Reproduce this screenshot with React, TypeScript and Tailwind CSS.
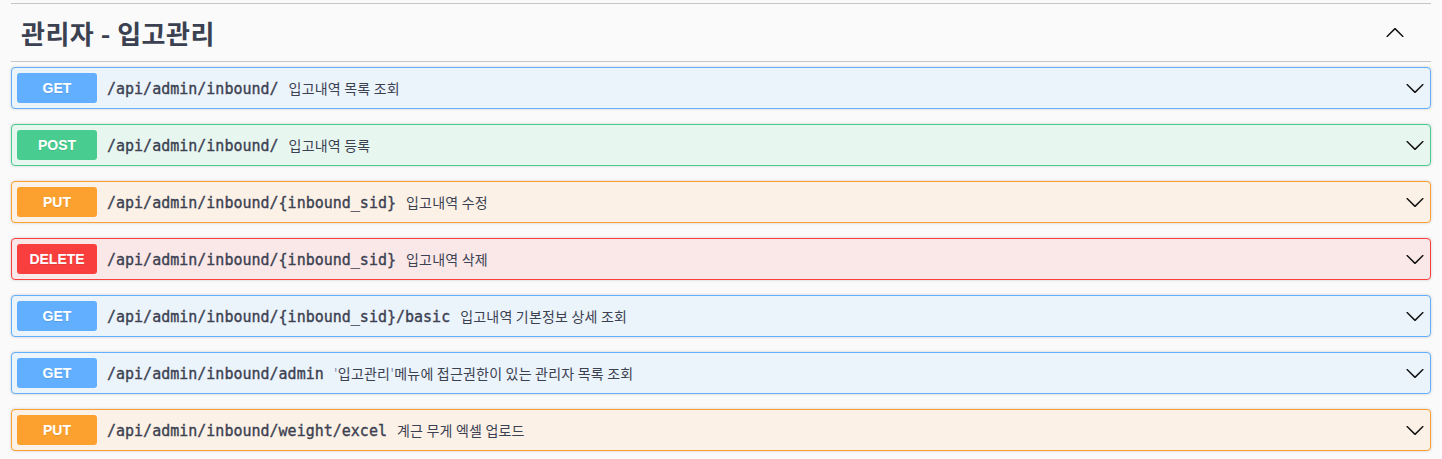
type Op = {
  method: "GET" | "POST" | "PUT" | "DELETE"
  path: string
  desc: React.ReactNode
}

const styles = {
  GET: { box: "border-[#61affe] bg-[#ebf3fb]", badge: "bg-[#61affe]" },
  POST: { box: "border-[#49cc90] bg-[#e8f6f0]", badge: "bg-[#49cc90]" },
  PUT: { box: "border-[#fca130] bg-[#fbf1e6]", badge: "bg-[#fca130]" },
  DELETE: { box: "border-[#f93e3e] bg-[#fae7e7]", badge: "bg-[#f93e3e]" },
}

const ops: Op[] = [
  { method: "GET", path: "/api/admin/inbound/", desc: "입고내역 목록 조회" },
  { method: "POST", path: "/api/admin/inbound/", desc: "입고내역 등록" },
  { method: "PUT", path: "/api/admin/inbound/{inbound_sid}", desc: "입고내역 수정" },
  { method: "DELETE", path: "/api/admin/inbound/{inbound_sid}", desc: "입고내역 삭제" },
  { method: "GET", path: "/api/admin/inbound/{inbound_sid}/basic", desc: "입고내역 기본정보 상세 조회" },
  {
    method: "GET",
    path: "/api/admin/inbound/admin",
    desc: (
      <>
        <span className="text-[#8a9bb8]">'</span>입고관리<span className="text-[#8a9bb8]">'</span>메뉴에 접근권한이 있는 관리자 목록 조회
      </>
    ),
  },
  { method: "PUT", path: "/api/admin/inbound/weight/excel", desc: "계근 무게 엑셀 업로드" },
]

function Arrow({ up = false }: { up?: boolean }) {
  return (
    <svg width="20" height="20" viewBox="0 0 20 20" className={`shrink-0 fill-[#111] ${up ? "rotate-180" : ""}`}>
      <path d="M17.418 6.109c.272-.268.709-.268.979 0s.271.701 0 .969l-7.908 7.83c-.27.268-.707.268-.979 0l-7.908-7.83c-.27-.268-.27-.701 0-.969.271-.268.709-.268.979 0L10 13.25l7.418-7.141z" />
    </svg>
  )
}

export default function App() {
  return (
    <div className="min-h-[459px] bg-[#fafafa] px-[11px] pt-[3px] text-[#3b4151] font-['Noto_Sans_CJK_KR',sans-serif]">
      <div className="border-t border-[#c4c6cb]">
        <div className="flex h-[58px] items-center justify-between border-b border-[#c4c6cb] pl-[10px] pr-[26px]">
          <h3 className="text-[26px] font-bold tracking-[0.5px]">관리자 - 입고관리</h3>
          <Arrow up />
        </div>
      </div>

      <div className="mt-[5px] flex flex-col gap-[15px]">
        {ops.map((op, i) => {
          const s = styles[op.method]
          return (
            <div
              key={i}
              className={`flex h-[42px] items-center rounded border p-[5px] shadow-[0_0_3px_rgba(0,0,0,0.19)] ${s.box}`}
            >
              <span
                className={`flex h-[30px] w-[80px] shrink-0 items-center justify-center rounded-[3px] text-[14px] font-bold text-white [text-shadow:0_1px_0_rgba(0,0,0,0.1)] font-['Liberation_Sans',sans-serif] ${s.badge}`}
              >
                {op.method}
              </span>
              <span className="px-[10px] pt-[2px] text-[15px] font-normal [-webkit-text-stroke:0.35px_#3b4151] font-['DejaVu_Sans_Mono',monospace]">
                {op.path}
              </span>
              <span className="flex-1 text-[14px] tracking-[0.2px] text-[#3b4151]">{op.desc}</span>
              <Arrow />
            </div>
          )
        })}
      </div>
    </div>
  )
}
